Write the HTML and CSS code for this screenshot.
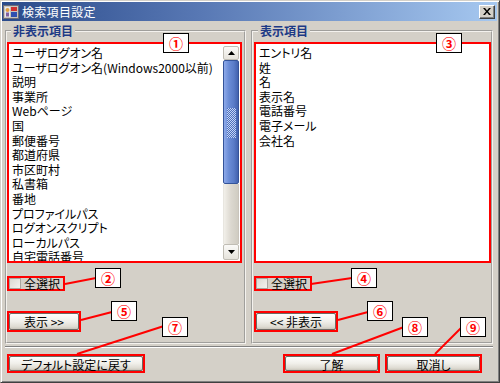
FILE: index.html
```html
<!DOCTYPE html>
<html lang="ja">
<head>
<meta charset="utf-8">
<title>検索項目設定</title>
<link rel="stylesheet" href="styles.css">
</head>
<body>
<div class="window">
  <div class="titlebar">
    <svg class="app-icon" width="16" height="16" viewBox="0 0 16 16">
      <rect x="0.5" y="1.5" width="15" height="13" fill="#c8c4bc" stroke="#6c6c78"/>
      <rect x="2" y="3" width="5" height="10" fill="#e8e8f0"/>
      <rect x="8" y="3" width="6" height="4" fill="#d03030"/>
      <rect x="8" y="8" width="6" height="5" fill="#3050b0"/>
      <circle cx="4.5" cy="6" r="2" fill="#e0a040"/>
      <rect x="3" y="8.5" width="3" height="4" fill="#8060a0"/>
    </svg>
    <span class="title">検索項目設定</span>
    <div class="close-btn">
      <svg width="8" height="7" viewBox="0 0 8 7"><path d="M0 0h2l2 2.5L6 0h2L5 3.5 8 7H6L4 4.5 2 7H0l3-3.5z" fill="#000"/></svg>
    </div>
  </div>

  <div class="content">
    <div class="panels">
      <fieldset class="group group-left">
        <legend>非表示項目</legend>
        <div class="mark list-mark">
          <div class="listbox">
            <ul class="items">
              <li>ユーザログオン名</li>
              <li>ユーザログオン名(Windows2000以前)</li>
              <li>説明</li>
              <li>事業所</li>
              <li>Webページ</li>
              <li>国</li>
              <li>郵便番号</li>
              <li>都道府県</li>
              <li>市区町村</li>
              <li>私書箱</li>
              <li>番地</li>
              <li>プロファイルパス</li>
              <li>ログオンスクリプト</li>
              <li>ローカルパス</li>
              <li>自宅電話番号</li>
            </ul>
            <div class="scrollbar">
              <div class="sb-btn sb-up"><svg width="7" height="4" viewBox="0 0 7 4"><path d="M3.5 0L7 4H0z" fill="#000"/></svg></div>
              <div class="sb-thumb"><span class="grip"></span></div>
              <div class="sb-track"></div>
              <div class="sb-btn sb-down"><svg width="7" height="4" viewBox="0 0 7 4"><path d="M0 0h7L3.5 4z" fill="#000"/></svg></div>
            </div>
          </div>
        </div>
        <div class="mark check-mark">
          <span class="checkbox"></span><span class="check-label">全選択</span>
        </div>
        <div class="mark btn-mark btn-show">
          <button class="btn">表示 &gt;&gt;</button>
        </div>
      </fieldset>

      <fieldset class="group group-right">
        <legend>表示項目</legend>
        <div class="mark list-mark list-mark-right">
          <div class="listbox">
            <ul class="items">
              <li>エントリ名</li>
              <li>姓</li>
              <li>名</li>
              <li>表示名</li>
              <li>電話番号</li>
              <li>電子メール</li>
              <li>会社名</li>
            </ul>
          </div>
        </div>
        <div class="mark check-mark">
          <span class="checkbox"></span><span class="check-label">全選択</span>
        </div>
        <div class="mark btn-mark btn-hide">
          <button class="btn">&lt;&lt; 非表示</button>
        </div>
      </fieldset>
    </div>

    <div class="sep"></div>

    <div class="footer">
      <div class="mark foot-mark btn-default"><button class="btn">デフォルト設定に戻す</button></div>
      <div class="mark foot-mark btn-ok"><button class="btn">了解</button></div>
      <div class="mark foot-mark btn-cancel"><button class="btn">取消し</button></div>
    </div>
  </div>

  <svg class="annot-lines" width="500" height="383" viewBox="0 0 500 383">
    <g stroke="#ff0000" stroke-width="2" fill="none">
      <line x1="65" y1="284" x2="96" y2="278"/>
      <line x1="81" y1="320" x2="112" y2="312"/>
      <line x1="77" y1="354" x2="164" y2="326"/>
      <line x1="311" y1="284" x2="352" y2="278"/>
      <line x1="338" y1="320" x2="368" y2="312"/>
      <line x1="332" y1="354" x2="404" y2="327"/>
      <line x1="435" y1="354" x2="462" y2="327"/>
    </g>
  </svg>

  <div class="callout c1">①</div>
  <div class="callout c2">②</div>
  <div class="callout c3">③</div>
  <div class="callout c4">④</div>
  <div class="callout c5">⑤</div>
  <div class="callout c6">⑥</div>
  <div class="callout c7">⑦</div>
  <div class="callout c8">⑧</div>
  <div class="callout c9">⑨</div>
</div>
</body>
</html>
```

FILE: styles.css
```css
* { box-sizing: border-box; }

html, body {
  margin: 0;
  padding: 0;
  background: #d4d0c8;
}

body {
  font-family: "Noto Sans CJK JP", "Liberation Sans", sans-serif;
  font-size: 12px;
  font-feature-settings: "palt";
  color: #000;
}

.window {
  position: relative;
  width: 500px;
  height: 383px;
  background: #d4d0c8;
  border: 1px solid;
  border-color: #d4d0c8 #404040 #404040 #d4d0c8;
  box-shadow: inset 1px 1px 0 #fff, inset -1px -1px 0 #808080;
  padding: 1px 2px 2px 1px;
  overflow: hidden;
}

.titlebar {
  height: 19px;
  display: flex;
  align-items: center;
  padding-left: 1px;
  background: linear-gradient(to right, #2a4a8a 0%, #5878b4 40%, #a6c8f0 100%);
}

.app-icon {
  flex: none;
  margin-right: 3px;
}

.title {
  color: #fff;
  font-size: 12px;
  line-height: 19px;
  letter-spacing: 0.3px;
  flex: 1;
}

.close-btn {
  width: 16px;
  height: 14px;
  margin-right: 2px;
  background: #d4d0c8;
  border: 1px solid;
  border-color: #fff #404040 #404040 #fff;
  box-shadow: inset -1px -1px 0 #808080;
  display: flex;
  align-items: center;
  justify-content: center;
}

.content {
  padding: 3px 4px 0 3px;
}

.panels {
  display: flex;
  gap: 5px;
}

.group {
  margin: 0;
  min-width: 0;
  border: 2px groove #f4f2ee;
  display: flex;
  flex-direction: column;
  align-items: flex-start;
  padding: 4px 2px 10px 0;
}

.group-left { width: 241px; }
.group-right { width: 242px; padding-left: 1px; padding-right: 1px; }

.group legend {
  margin-left: 4px;
  padding: 0 2px;
  font-weight: bold;
  font-size: 12px;
  line-height: 14px;
  color: #1d3a86;
}

.mark {
  border: 2px solid #ff0000;
}

.list-mark {
  width: 235px;
  height: 221px;
}

.list-mark-right { width: 237px; }

.listbox {
  width: 100%;
  height: 100%;
  background: #fff;
  display: flex;
}

.items {
  list-style: none;
  margin: 0;
  padding: 2px 0 0 3px;
  flex: 1;
  overflow: hidden;
  line-height: 14.6px;
  white-space: nowrap;
}

.scrollbar {
  width: 16px;
  margin: 2px 1px 1px 0;
  display: flex;
  flex-direction: column;
  flex: none;
}

.sb-btn {
  display: flex;
  align-items: center;
  justify-content: center;
  background: linear-gradient(to bottom, #fbfaf8, #e6e3dc);
  border: 1px solid #c0bdb4;
  border-radius: 2px;
}

.sb-up { height: 14px; }
.sb-down { height: 16px; }

.sb-thumb {
  height: 124px;
  border: 1px solid #34549a;
  border-radius: 2px;
  background: linear-gradient(to right, #8eaaea 0%, #6a8cd6 35%, #5a7cc8 70%, #4262ae 100%);
  display: flex;
  align-items: center;
  justify-content: center;
}

.grip {
  width: 9px;
  height: 30px;
  margin-top: 2px;
  background: repeating-conic-gradient(#c4d4f6 0 25%, #4e70bc 0 50%) 0 0 / 2px 2px;
}

.sb-track {
  flex: 1;
  background: linear-gradient(to right, #f2f0ea, #dcd8d0 50%, #d0ccc2);
  border-left: 1px solid #e8e6e0;
  border-right: 1px solid #c8c4bc;
}

.check-mark {
  margin-top: 13px;
  width: 58px;
  height: 15px;
  display: flex;
  align-items: center;
  gap: 3px;
}

.checkbox {
  width: 12px;
  height: 11px;
  background: linear-gradient(135deg, #dcd9d2, #f4f3ef);
  border: 1px solid #a8a59e;
}

.check-label {
  line-height: 11px;
  white-space: nowrap;
}

.btn-mark {
  margin-top: 20px;
  height: 21px;
}

.btn-show { width: 74px; }
.btn-hide { width: 84px; }

.btn {
  display: block;
  width: 100%;
  height: 100%;
  margin: 0;
  padding: 0;
  font-family: inherit;
  font-size: 12px;
  font-feature-settings: "palt";
  color: #000;
  line-height: 15px;
  border: 1px solid #6c6a64;
  border-radius: 2px;
  background: linear-gradient(to bottom, #fefefd 0%, #f0efea 50%, #dedbd2 85%, #cac6bc 100%);
  white-space: nowrap;
}

.sep {
  margin-top: 2px;
  height: 2px;
  border-top: 1px solid #808080;
  border-bottom: 1px solid #fff;
}

.footer {
  display: flex;
  margin-top: 6px;
  padding: 0 11px 0 2px;
  gap: 5px;
}

.foot-mark { height: 19px; }
.btn-default { width: 138px; }
.btn-ok { width: 97px; margin-left: auto; }
.btn-cancel { width: 97px; }

.annot-lines {
  position: absolute;
  left: -1px;
  top: -1px;
  pointer-events: none;
}

.callout {
  position: absolute;
  width: 26px;
  height: 20px;
  background: #fff;
  border: 1px solid #000;
  color: #ff0000;
  font-weight: bold;
  font-size: 14px;
  line-height: 18px;
  text-align: center;
}

.c1 { left: 162px; top: 32px; }
.c3 { left: 435px; top: 32px; }
.c2 { left: 94px; top: 267px; }
.c4 { left: 350px; top: 267px; }
.c5 { left: 110px; top: 300px; }
.c6 { left: 366px; top: 300px; }
.c7 { left: 161px; top: 316px; }
.c8 { left: 401px; top: 316px; }
.c9 { left: 459px; top: 316px; }
```
